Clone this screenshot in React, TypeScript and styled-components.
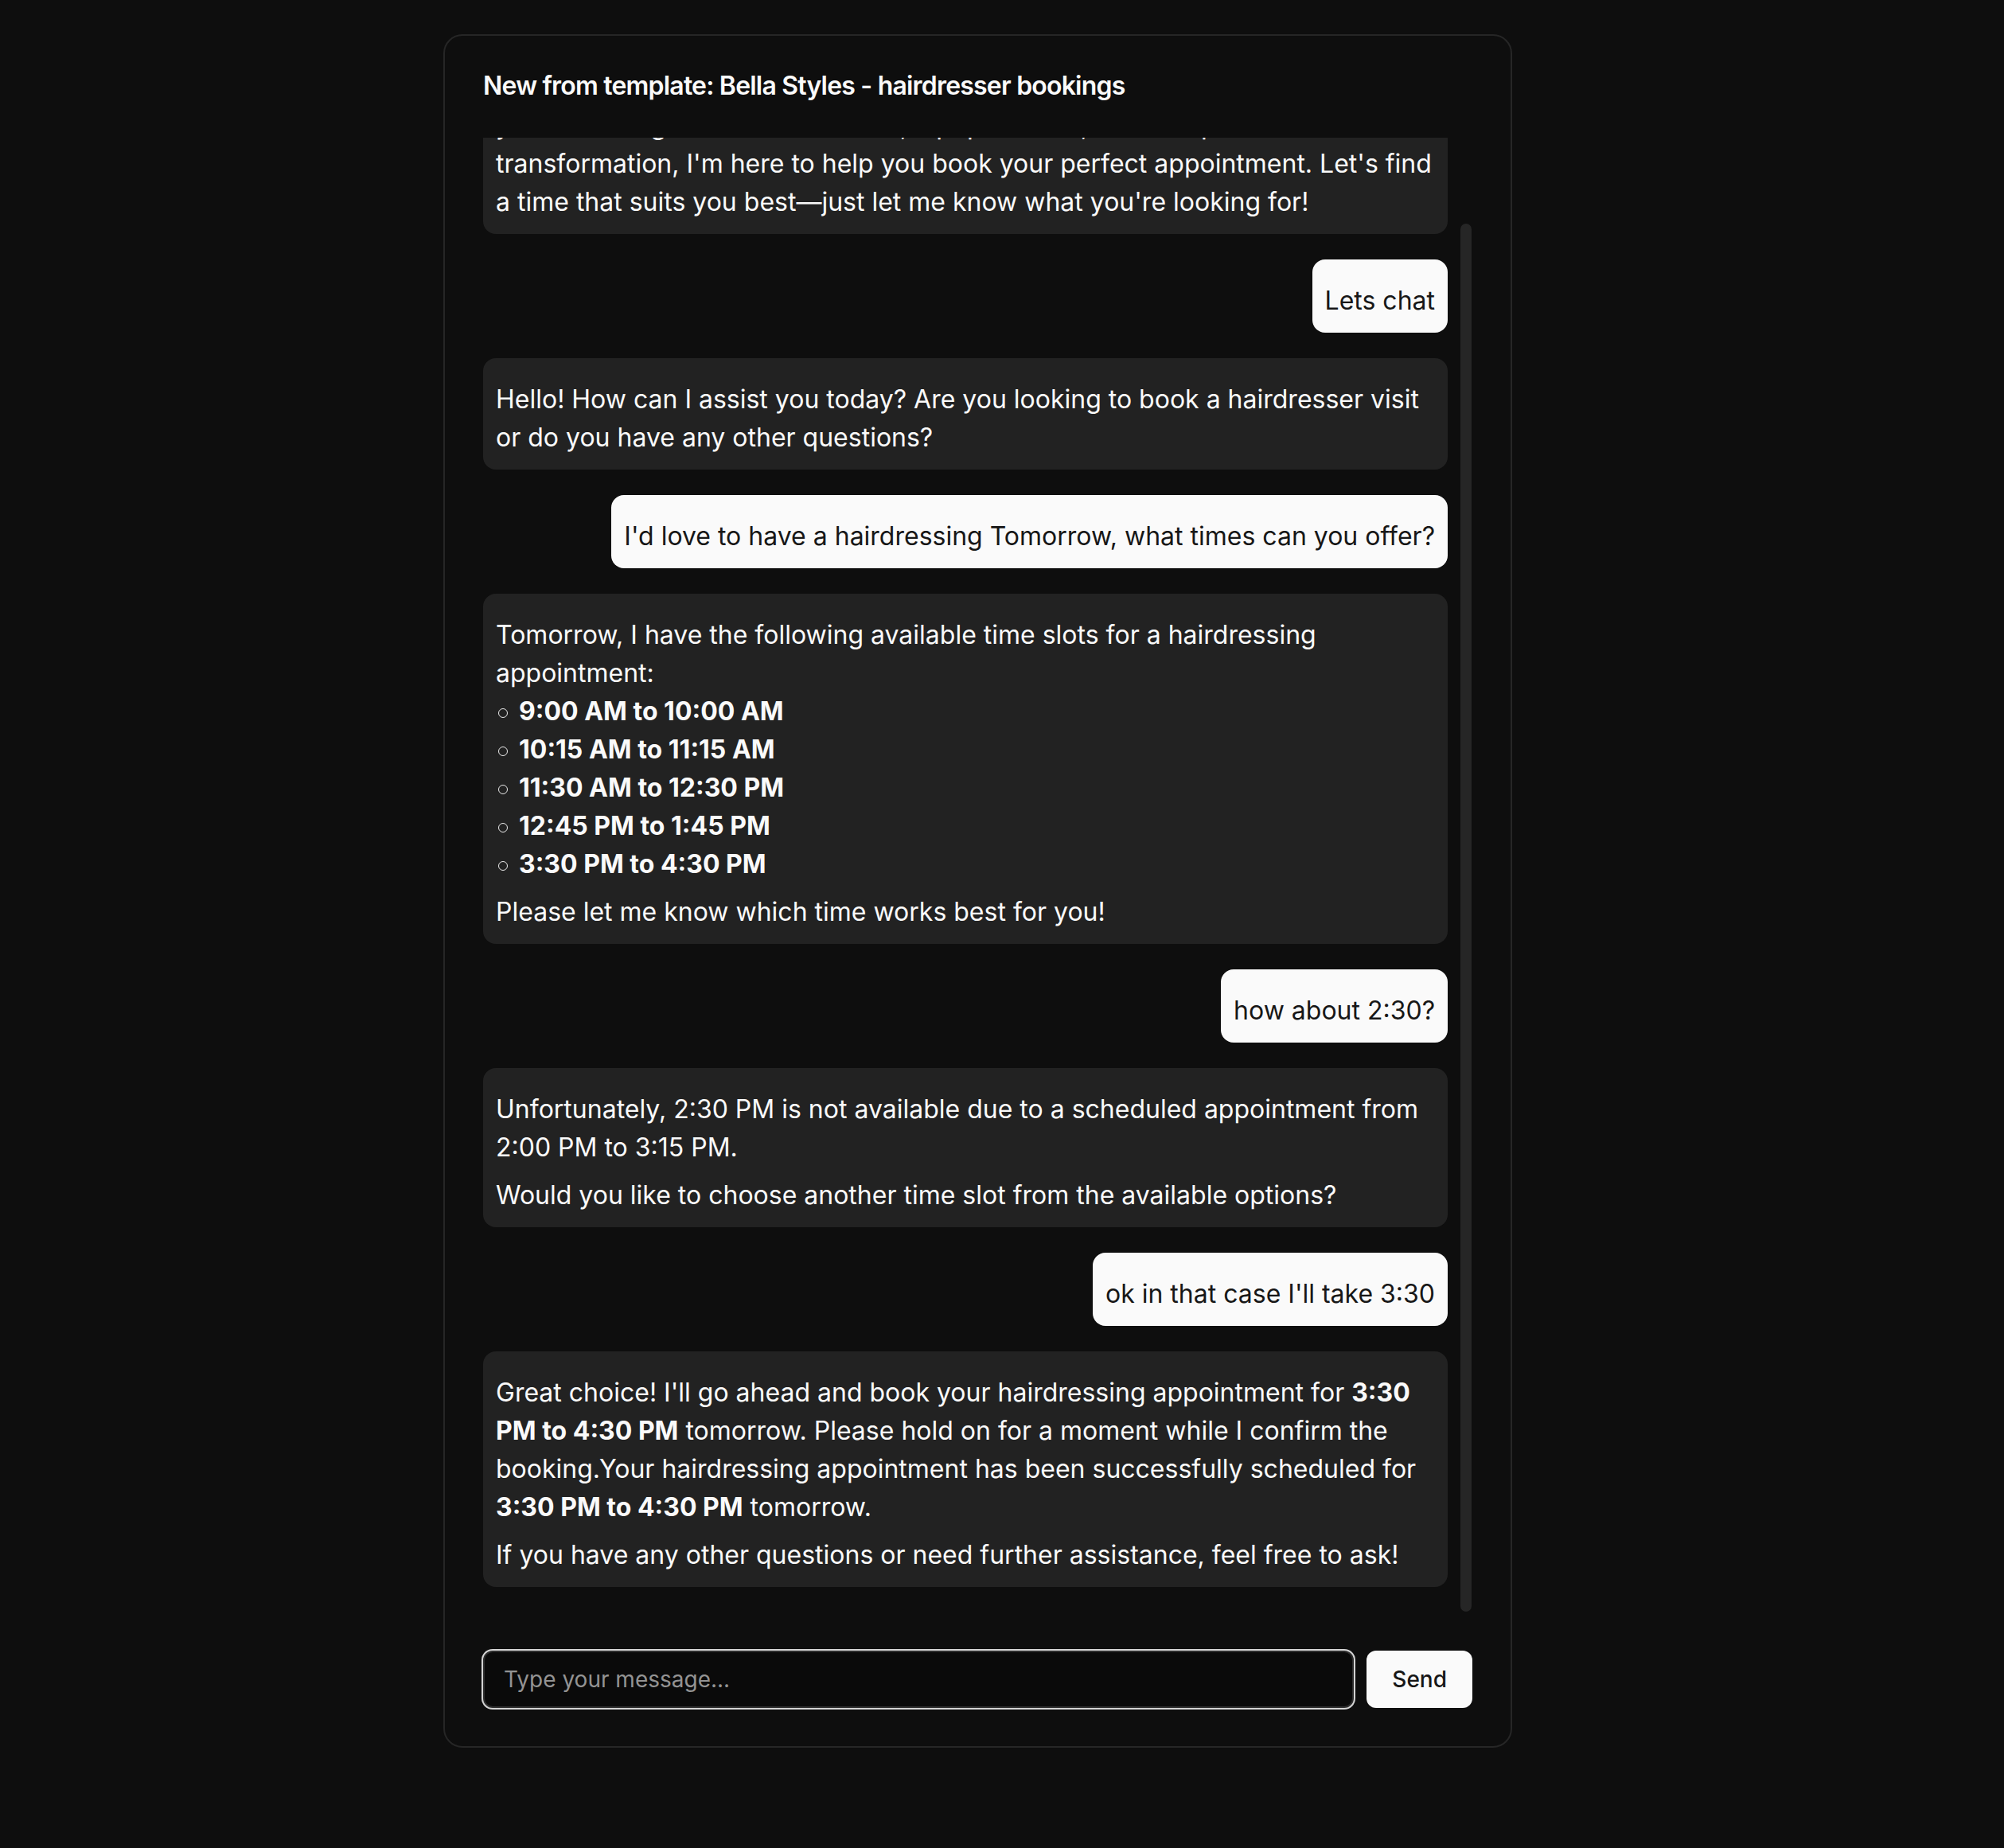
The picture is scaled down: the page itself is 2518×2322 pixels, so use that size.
import React, { useCallback, useEffect, useLayoutEffect, useRef, useState } from "react";
import styled, { createGlobalStyle } from "styled-components";

const GlobalStyle = createGlobalStyle`
  html, body {
    margin: 0;
    padding: 0;
    background: #0e0e0e;
  }
  body {
    font-family: Inter, "Noto Sans", "Liberation Sans", sans-serif;
    color: #fafafa;
    -webkit-font-smoothing: antialiased;
  }
  * { box-sizing: border-box; }
`;

const Page = styled.div`
  width: 2457px;
  min-height: 2322px;
  display: flex;
  justify-content: center;
  align-items: flex-start;
  padding-top: 43px;
`;

const Card = styled.section`
  width: 1343px;
  border: 2px solid #262626;
  border-radius: 24px;
  background: #0e0e0e;
  display: flex;
  flex-direction: column;
`;

const Header = styled.header`
  padding: 44px 48px 46px;
`;

const Title = styled.h3`
  margin: 0;
  font-size: 32px;
  line-height: 38px;
  font-weight: 600;
  letter-spacing: -0.025em;
  color: #fafafa;
`;

const Content = styled.div`
  padding: 0 48px 48px;
  display: flex;
  flex-direction: column;
`;

const ScrollArea = styled.div`
  position: relative;
  height: 1852px;
`;

const Scroller = styled.div`
  height: 100%;
  overflow-y: auto;
  scrollbar-width: none;
  padding: 0 31px 31px 0;
  display: flex;
  flex-direction: column;
  gap: 32px;
  &::-webkit-scrollbar { display: none; }
`;

const Thumb = styled.div`
  position: absolute;
  right: 1px;
  width: 14px;
  border-radius: 7px;
  background: #262626;
  pointer-events: none;
`;

const Bubble = styled.div<{ $user?: boolean }>`
  align-self: ${(p) => (p.$user ? "flex-end" : "flex-start")};
  max-width: 100%;
  flex-shrink: 0;
  padding: 16px;
  border-radius: 16px;
  background: ${(p) => (p.$user ? "#fafafa" : "#222222")};
  color: ${(p) => (p.$user ? "#171717" : "#fafafa")};
  font-size: 32px;
  line-height: 48px;
  font-weight: 400;
`;

const Para = styled.div`
  margin-top: 12px;
`;

const Slots = styled.ul`
  list-style: none;
  margin: 0;
  padding: 0;
`;

const Slot = styled.li`
  font-weight: 700;
  &::before {
    content: "";
    display: inline-block;
    width: 10px;
    height: 10px;
    border: 1.5px solid #e8e8e8;
    border-radius: 50%;
    margin: 0 14px 3px 3px;
    vertical-align: baseline;
  }
`;

const Strong = styled.strong`
  font-weight: 700;
`;

const Form = styled.form`
  margin-top: 49px;
  display: flex;
  gap: 16px;
  align-items: center;
`;

const Input = styled.input`
  flex: 1;
  height: 72px;
  padding: 0 24px;
  border: 2px solid #2e2e2e;
  border-radius: 12px;
  background: #0a0a0a;
  color: #fafafa;
  font-family: Inter, "Noto Sans", "Liberation Sans", sans-serif;
  font-size: 28px;
  box-shadow: 0 0 0 2px #d4d4d4;
  outline: none;
  &::placeholder { color: #939393; }
`;

const SendButton = styled.button`
  height: 72px;
  padding: 0 32px;
  border: none;
  border-radius: 12px;
  background: #fafafa;
  color: #171717;
  font-family: Inter, "Noto Sans", "Liberation Sans", sans-serif;
  font-size: 28px;
  font-weight: 500;
  cursor: pointer;
`;

const slots = [
  "9:00 AM to 10:00 AM",
  "10:15 AM to 11:15 AM",
  "11:30 AM to 12:30 PM",
  "12:45 PM to 1:45 PM",
  "3:30 PM to 4:30 PM",
];

export default function App() {
  const scrollRef = useRef<HTMLDivElement>(null);
  const [thumb, setThumb] = useState({ top: 0, height: 0 });

  const update = useCallback(() => {
    const el = scrollRef.current;
    if (!el) return;
    const { scrollTop, scrollHeight, clientHeight } = el;
    if (scrollHeight <= clientHeight) {
      setThumb({ top: 0, height: 0 });
      return;
    }
    setThumb({
      top: (scrollTop / scrollHeight) * clientHeight,
      height: (clientHeight * clientHeight) / scrollHeight,
    });
  }, []);

  const toBottom = useCallback(() => {
    const el = scrollRef.current;
    if (!el) return;
    el.scrollTop = el.scrollHeight;
    update();
  }, [update]);

  useLayoutEffect(() => {
    toBottom();
  }, [toBottom]);

  useEffect(() => {
    if (document.fonts && document.fonts.ready) {
      document.fonts.ready.then(toBottom);
    }
  }, [toBottom]);

  return (
    <>
      <GlobalStyle />
      <Page>
        <Card>
          <Header>
            <Title>New from template: Bella Styles - hairdresser bookings</Title>
          </Header>
          <Content>
            <ScrollArea>
              <Scroller ref={scrollRef} onScroll={update}>
                <Bubble>
                  <Para>
                    Welcome to Bella Styles, the home of beautiful hair and great vibes! Whether
                    you're looking for a fresh new cut, a pop of color, or a complete
                    transformation, I'm here to help you book your perfect appointment. Let's find
                    a time that suits you best—just let me know what you're looking for!
                  </Para>
                </Bubble>
                <Bubble $user>
                  <Para>Lets chat</Para>
                </Bubble>
                <Bubble>
                  <Para>
                    Hello! How can I assist you today? Are you looking to book a hairdresser visit
                    or do you have any other questions?
                  </Para>
                </Bubble>
                <Bubble $user>
                  <Para>I'd love to have a hairdressing Tomorrow, what times can you offer?</Para>
                </Bubble>
                <Bubble>
                  <Para>
                    Tomorrow, I have the following available time slots for a hairdressing
                    appointment:
                    <Slots>
                      {slots.map((s) => (
                        <Slot key={s}>{s}</Slot>
                      ))}
                    </Slots>
                  </Para>
                  <Para>Please let me know which time works best for you!</Para>
                </Bubble>
                <Bubble $user>
                  <Para>how about 2:30?</Para>
                </Bubble>
                <Bubble>
                  <Para>
                    Unfortunately, 2:30 PM is not available due to a scheduled appointment from
                    2:00 PM to 3:15 PM.
                  </Para>
                  <Para>Would you like to choose another time slot from the available options?</Para>
                </Bubble>
                <Bubble $user>
                  <Para>ok in that case I'll take 3:30</Para>
                </Bubble>
                <Bubble>
                  <Para>
                    Great choice! I'll go ahead and book your hairdressing appointment for{" "}
                    <Strong>3:30 PM to 4:30 PM</Strong> tomorrow. Please hold on for a moment while I
                    confirm the booking.Your hairdressing appointment has been successfully
                    scheduled for <Strong>3:30 PM to 4:30 PM</Strong> tomorrow.
                  </Para>
                  <Para>If you have any other questions or need further assistance, feel free to ask!</Para>
                </Bubble>
              </Scroller>
              {thumb.height > 0 && (
                <Thumb style={{ top: thumb.top, height: thumb.height }} />
              )}
            </ScrollArea>
            <Form onSubmit={(e) => e.preventDefault()}>
              <Input type="text" placeholder="Type your message..." />
              <SendButton type="submit">Send</SendButton>
            </Form>
          </Content>
        </Card>
      </Page>
    </>
  );
}
